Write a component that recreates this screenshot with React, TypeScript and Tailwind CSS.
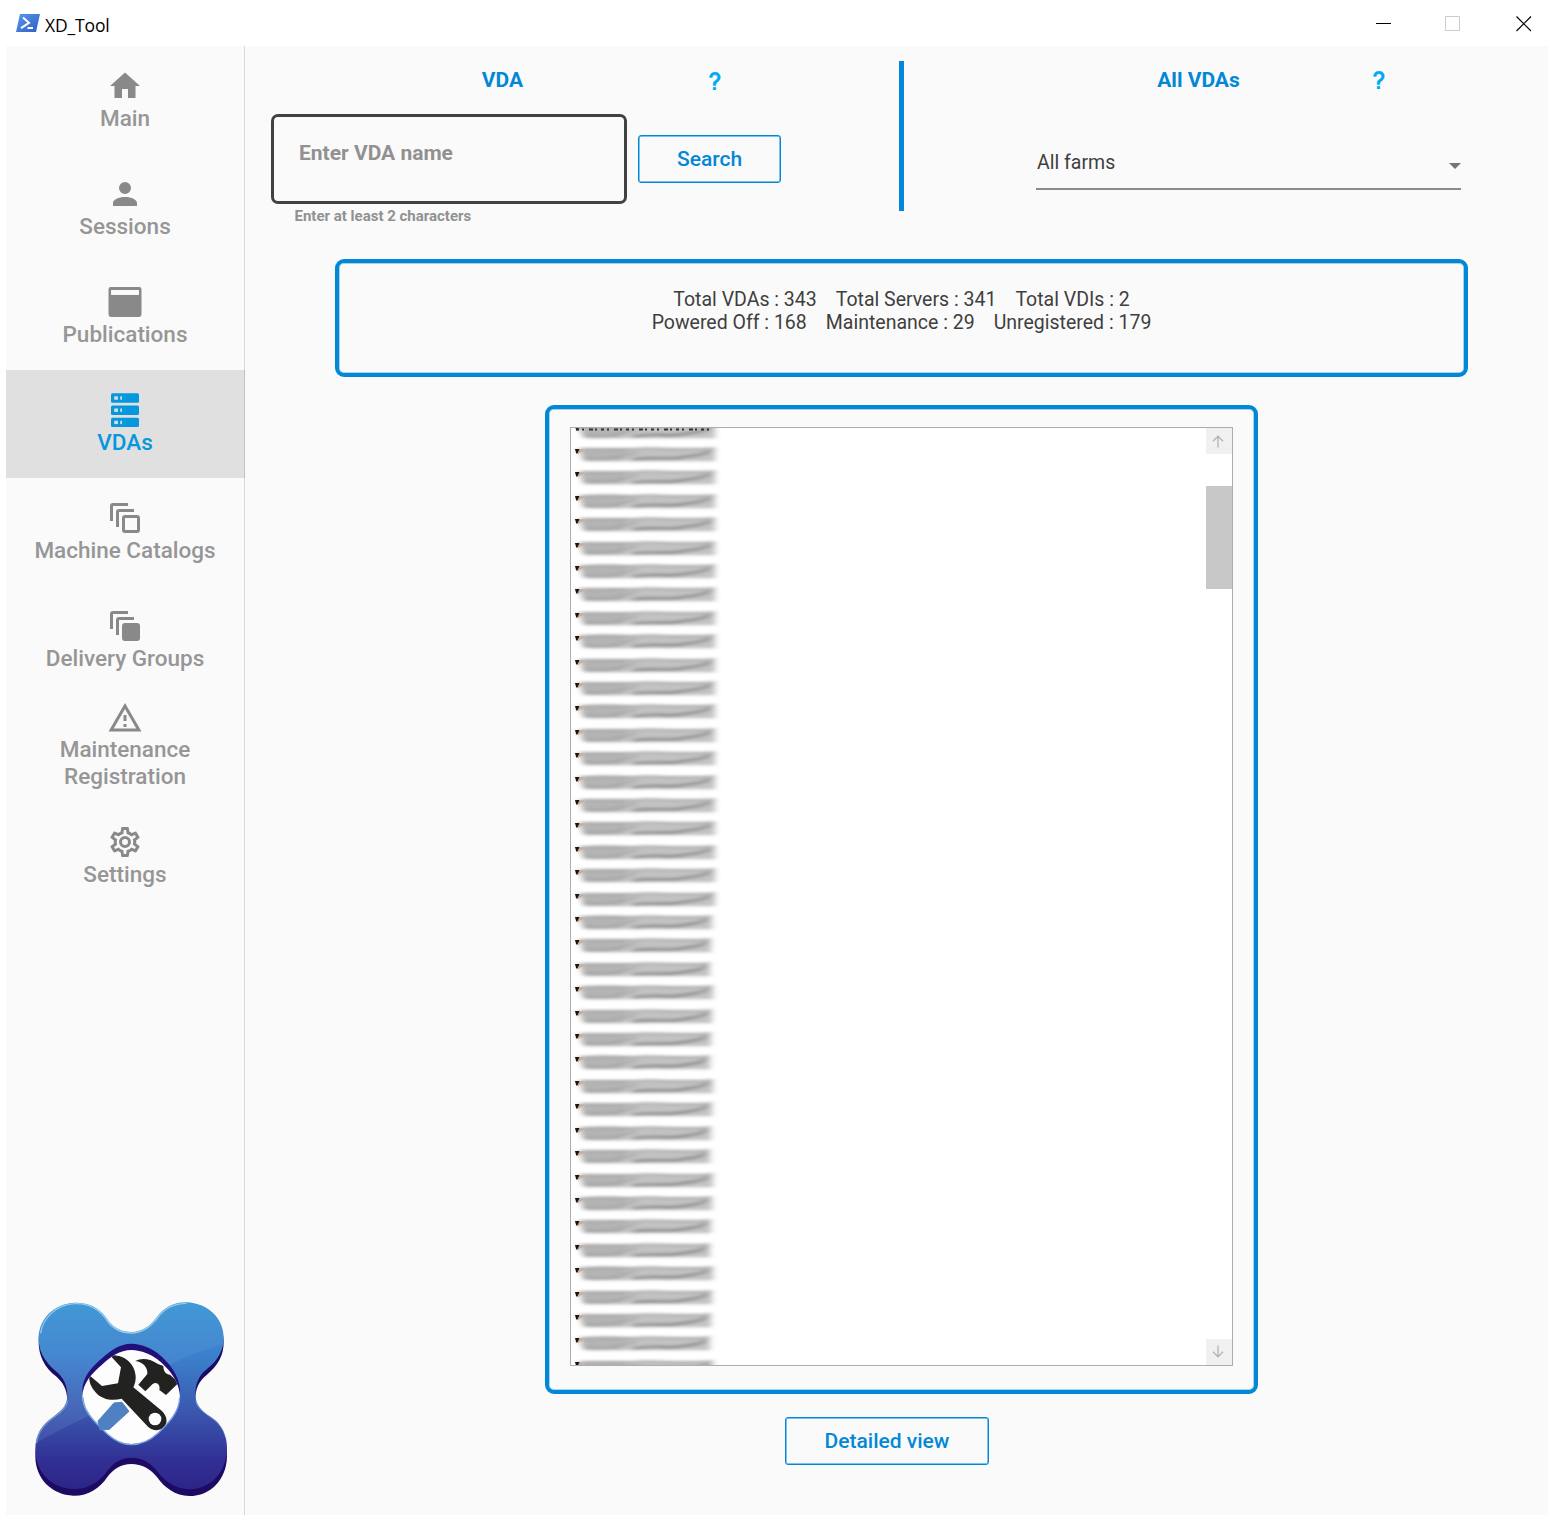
import type { ReactNode } from "react";

const HOME = "M10,20V14H14V20H19V12H22L12,3L2,12H5V20H10Z";
const PERSON =
  "M12,4A4,4 0 0,1 16,8A4,4 0 0,1 12,12A4,4 0 0,1 8,8A4,4 0 0,1 12,4M12,14C16.42,14 20,15.79 20,18V20H4V18C4,15.79 7.58,14 12,14Z";
const WARNING = "M12,2L1,21H23M12,6L19.53,19H4.47M11,10V14H13V10M11,16V18H13V16";
const COG =
  "M12,8A4,4 0 0,1 16,12A4,4 0 0,1 12,16A4,4 0 0,1 8,12A4,4 0 0,1 12,8M12,10A2,2 0 0,0 10,12A2,2 0 0,0 12,14A2,2 0 0,0 14,12A2,2 0 0,0 12,10M10,22C9.75,22 9.54,21.82 9.5,21.58L9.13,18.93C8.5,18.68 7.96,18.34 7.44,17.94L4.95,18.95C4.73,19.03 4.46,18.95 4.34,18.73L2.34,15.27C2.21,15.05 2.27,14.78 2.46,14.63L4.57,12.97L4.5,12L4.57,11L2.46,9.37C2.27,9.22 2.21,8.95 2.34,8.73L4.34,5.27C4.46,5.05 4.73,4.96 4.95,5.05L7.44,6.05C7.96,5.66 8.5,5.32 9.13,5.07L9.5,2.42C9.54,2.18 9.75,2 10,2H14C14.25,2 14.46,2.18 14.5,2.42L14.87,5.07C15.5,5.32 16.04,5.66 16.56,6.05L19.05,5.05C19.27,4.96 19.54,5.05 19.66,5.27L21.66,8.73C21.79,8.95 21.73,9.22 21.54,9.37L19.43,11L19.5,12L19.43,13L21.54,14.63C21.73,14.78 21.79,15.05 21.66,15.27L19.66,18.73C19.54,18.95 19.27,19.04 19.05,18.95L16.56,17.95C16.04,18.34 15.5,18.68 14.87,18.93L14.5,21.58C14.46,21.82 14.25,22 14,22H10M11.25,4L10.88,6.61C9.68,6.86 8.62,7.5 7.85,8.39L5.44,7.35L4.69,8.65L6.8,10.2C6.4,11.37 6.4,12.64 6.8,13.8L4.68,15.36L5.43,16.66L7.86,15.62C8.63,16.5 9.68,17.14 10.87,17.38L11.24,20H12.76L13.13,17.39C14.32,17.14 15.37,16.5 16.14,15.62L18.57,16.66L19.32,15.36L17.2,13.81C17.6,12.64 17.6,11.37 17.2,10.2L19.31,8.65L18.56,7.35L16.15,8.39C15.38,7.5 14.32,6.86 13.12,6.62L12.75,4H11.25Z";
const HELP =
  "M10,19H13V22H10V19M12,2C17.35,2.22 19.68,7.62 16.5,11.67C15.67,12.67 14.33,13.33 13.67,14.17C13,15 13,16 13,17H10C10,15.33 10,13.92 10.67,12.92C11.33,11.92 12.67,11.33 13.5,10.67C15.92,8.43 15.32,5.26 12,5A3,3 0 0,0 9,8H6A6,6 0 0,1 12,2Z";

function Icon({ children }: { children: ReactNode }) {
  return (
    <svg viewBox="0 0 24 24" className="h-9 w-9 shrink-0" fill="currentColor" fillRule="evenodd">
      {children}
    </svg>
  );
}

function StackIcon({ filled }: { filled: boolean }) {
  return (
    <Icon>
      <path d="M14 2v2H4v10H2V4a2 2 0 0 1 2-2zM18 6v2H8v10H6V8a2 2 0 0 1 2-2z" />
      {filled ? (
        <rect x="10" y="10" width="12" height="12" rx="2" />
      ) : (
        <rect x="11" y="11" width="10" height="10" rx="1" fill="none" stroke="currentColor" strokeWidth="2" />
      )}
    </Icon>
  );
}

function ServerIcon() {
  return (
    <svg viewBox="0 0 36 36" className="h-9 w-9 shrink-0" fill="currentColor">
      {[1.3, 13.5, 25.7].map((y) => (
        <g key={y}>
          <rect x="4" y={y} width="28" height="9.4" rx="1.5" />
          <rect x="7.3" y={y + 3} width="3.6" height="3.4" fill="#e0e0e0" />
          <rect x="13.3" y={y + 3} width="1.7" height="3.4" fill="#e0e0e0" />
        </g>
      ))}
    </svg>
  );
}

const NAV: { label: string; icon: ReactNode; active?: boolean }[] = [
  { label: "Main", icon: <Icon><path d={HOME} /></Icon> },
  { label: "Sessions", icon: <Icon><path d={PERSON} /></Icon> },
  {
    label: "Publications",
    icon: (
      <Icon>
        <path d="M2.6 2H21.4A1.6 1.6 0 0 1 23 3.6V20.4A1.6 1.6 0 0 1 21.4 22H2.6A1.6 1.6 0 0 1 1 20.4V3.6A1.6 1.6 0 0 1 2.6 2ZM2.8 4V7.2H21.2V4Z" />
        <path d="M2.8 4V7.2H21.2V4Z" fill="#fafafa" />
      </Icon>
    ),
  },
  { label: "VDAs", icon: <ServerIcon />, active: true },
  { label: "Machine Catalogs", icon: <StackIcon filled={false} /> },
  { label: "Delivery Groups", icon: <StackIcon filled /> },
  { label: "Maintenance\nRegistration", icon: <Icon><path d={WARNING} /></Icon> },
  { label: "Settings", icon: <Icon><path d={COG} /></Icon> },
];

function Logo() {
  const body =
    "M165 38C215 36 245 62 262 88C280 114 304 126 334 126C368 126 390 108 410 82C430 54 462 36 500 37C562 40 610 88 611 148C612 190 592 222 560 246C535 266 526 288 526 318C527 350 546 368 572 384C604 404 622 440 621 485C619 552 572 600 508 600C466 600 432 574 412 546C392 520 366 506 334 506C302 506 282 520 262 544C240 576 204 600 160 599C96 597 46 550 46 484C46 440 66 406 100 384C126 366 142 350 142 320C141 290 130 268 108 250C74 224 55 190 56 146C58 86 104 40 165 38Z";
  const face =
    "M165 38C215 36 245 62 262 88C280 114 304 126 334 126C368 126 390 108 410 82C430 54 462 36 500 37C562 40 610 82 611 142C612 180 592 214 560 238C535 258 526 284 526 314C527 346 546 364 572 380C604 400 622 434 621 478C619 548 572 597 508 598C466 598 432 572 412 544C392 518 366 503 334 503C302 503 282 518 262 542C240 574 204 598 160 597C96 595 46 548 46 477C46 434 66 402 100 380C126 362 142 346 142 316C141 284 130 262 108 244C74 216 55 184 56 142C58 84 104 40 165 38Z";
  const hole =
    "M334 180C366 182 392 192 412 208C440 230 480 272 480 322C478 366 446 396 416 426C394 448 366 462 334 462C304 462 280 448 258 428C226 398 188 366 187 322C187 278 218 248 246 224C272 200 300 180 334 180Z";
  return (
    <svg viewBox="30 21 612 618" className="h-[206px] w-[204px] shrink-0">
      <defs>
        <linearGradient id="face" x1="0" y1="0" x2="0" y2="1">
          <stop offset="0" stopColor="#3c96d6" />
          <stop offset="0.3" stopColor="#3b7fcb" />
          <stop offset="0.6" stopColor="#3a55ad" />
          <stop offset="0.85" stopColor="#312f94" />
          <stop offset="1" stopColor="#2d2588" />
        </linearGradient>
        <linearGradient id="gloss" x1="0" y1="0" x2="0" y2="1">
          <stop offset="0" stopColor="#fff" stopOpacity="0.02" />
          <stop offset="1" stopColor="#8fc4f4" stopOpacity="0.14" />
        </linearGradient>
        <clipPath id="faceClip"><path d={face} /></clipPath>
        <clipPath id="holeClip"><path d={hole} /></clipPath>
      </defs>
      <path d={body} fill="#1d0a62" transform="translate(0 2) scale(1 1.027)" />
      <path d={face} fill="url(#face)" />
      <g clipPath="url(#faceClip)">
        <path d="M30 20H642V150C560 180 470 200 400 260C270 360 140 400 30 470Z" fill="url(#gloss)" />
        <path
          d="M62 130C68 86 106 44 165 41C213 39 242 64 260 90C280 118 304 129 334 129C368 129 392 110 412 84C432 56 464 40 500 40"
          fill="none" stroke="#b8e2f8" strokeWidth="4" opacity="0.7"
        />
        <path d="M50 460C54 420 80 396 104 380C126 366 140 350 143 332" fill="none" stroke="#8fb9e8" strokeWidth="4" opacity="0.6" />
        <path d="M528 332C530 350 548 366 574 382C596 396 612 418 618 444" fill="none" stroke="#8fb9e8" strokeWidth="4" opacity="0.6" />
      </g>
      <path d={hole} fill="#22107a" transform="translate(0 -19)" />
      <path d={hole} fill="#fdfdfd" />
      <path d="M189 322C190 366 228 400 262 432C284 452 306 464 334 464C364 464 392 450 414 430C446 398 478 368 479 322" fill="none" stroke="#7ba4de" strokeWidth="4" />
      <g clipPath="url(#holeClip)">
        <path
          d="M270 196C310 192 344 218 347 258C348 272 344 284 340 292L425 362C444 380 444 402 428 414C416 424 396 422 384 410L305 326C276 334 246 328 228 308C212 292 206 274 208 256L246 288L294 280L303 232Z"
          fill="#222221"
        />
        <path
          d="M346 213C364 202 392 206 414 222L430 228C430 244 438 254 450 254L476 278L438 315L418 300C422 284 410 274 398 282L376 304L355 284L382 252C384 232 368 216 346 213Z"
          fill="#222221"
        />
      </g>
      <circle cx="405" cy="387" r="19" fill="#fdfdfd" />
      <path d="M282 339L306 337L327 364L268 418L240 420L234 393Z" fill="#4f81c2" stroke="#4f81c2" strokeWidth="3" strokeLinejoin="round" />
    </svg>
  );
}

function Sidebar() {
  return (
    <nav className="flex w-[239px] shrink-0 flex-col border-r border-[#d8d8d8]">
      {NAV.map((n) => (
        <div
          key={n.label}
          className={
            n.active
              ? "-mr-px flex h-27 shrink-0 flex-col items-center gap-px border-r border-[#c2c2c2] bg-[#e0e0e0] pt-[22px] text-[#0598dc]"
              : n.label.includes("\n")
                ? "flex h-27 shrink-0 flex-col items-center pt-[6px] text-[#898989]"
                : "flex h-27 shrink-0 flex-col items-center gap-px pt-[22px] text-[#898989]"
          }
        >
          {n.icon}
          <span
            className={
              n.active
                ? "text-center text-[22.5px] leading-[27px] font-medium"
                : "text-center text-[22.5px] leading-[27px] font-medium whitespace-pre-line text-[#969696]"
            }
          >
            {n.label}
          </span>
        </div>
      ))}
      <div className="mt-auto pb-3 pl-6">
        <Logo />
      </div>
    </nav>
  );
}

function TitleBar() {
  return (
    <header className="flex h-[46px] shrink-0 items-center bg-white pl-[15px]">
      <svg viewBox="0 0 26 20" className="h-5 w-[26px]">
        <defs>
          <linearGradient id="ps" x1="0" y1="0" x2="1" y2="1">
            <stop offset="0" stopColor="#5a97ef" />
            <stop offset="1" stopColor="#2c5fc4" />
          </linearGradient>
        </defs>
        <path d="M5 1H25L21 19H1Z" fill="url(#ps)" />
        <path d="M8 4.5L14 9.8L6 15.2" fill="none" stroke="#fff" strokeWidth="2" />
        <path d="M12.5 15H18" stroke="#fff" strokeWidth="2" />
      </svg>
      <span className="ml-1 pt-[3px] font-['Open_Sans',sans-serif] text-[17.5px] leading-6 tracking-[-0.15px] text-black">XD_Tool</span>
      <div className="mt-0.5 ml-auto flex items-center pr-[22px]">
        <svg viewBox="0 0 16 16" className="h-4 w-4"><path d="M0 7.5H15" stroke="#000" /></svg>
        <svg viewBox="0 0 16 16" className="ml-[53px] h-4 w-4"><path d="M.5 .5H14.5V14.5H.5Z" fill="none" stroke="#ccc" /></svg>
        <svg viewBox="0 0 16 16" className="ml-[55px] h-4 w-4"><path d="M.5 .5L15 15M15 .5L.5 15" stroke="#000" strokeWidth="1.2" /></svg>
      </div>
    </header>
  );
}

function Help({ className }: { className: string }) {
  return (
    <svg viewBox="6 2 12 20" className={className} fill="#03a9f4" stroke="#03a9f4" strokeWidth="0.5">
      <path d={HELP} />
    </svg>
  );
}

const STATS = [
  ["Total VDAs : 343", "Total Servers : 341", "Total VDIs : 2"],
  ["Powered Off : 168", "Maintenance : 29", "Unregistered : 179"],
];

const ROWS = Array.from({ length: 41 }, (_, i) => i);

function SmudgedRow({ index }: { index: number }) {
  const w = index < 21 ? 146 : 144 - (index % 4);
  const bend = (index % 3) - 1;
  return (
    <svg viewBox="0 0 150 23.41" className="block h-[23.41px] w-[150px]">
      <g filter="url(#smear)">
        <path d={`M7 5.2H${w - 2}V18.2H13Z`} fill="#c2c2c2" />
        <path d="M8 5.6H58L50 17.8H14Z" fill="#a6a6a6" opacity="0.5" />
        <path d={`M12 6C40 ${5 + bend} 56 7 68 5.5S110 8 ${w - 2} 5`} fill="none" stroke="#9c9c9c" strokeWidth="1.6" />
        <path d={`M62 16.5C84 ${13.5 + bend} 96 17 110 14.5S128 13 ${w - 6} 8`} fill="none" stroke="#858585" strokeWidth="2.4" />
        <path d={`M12 15C30 ${18 - bend} 44 16 66 9`} fill="none" stroke="#9f9f9f" strokeWidth="1.8" />
      </g>
      <path d="M5 6.5L13 6.5L7 11.5Z" fill="#c98c58" opacity="0.55" />
      <path d="M4 6H8.5L6.4 10.5H5.2Z" fill="#14141c" />
    </svg>
  );
}

function ScrollArrow({ down }: { down?: boolean }) {
  return (
    <div className="flex h-[26px] w-[26px] shrink-0 items-center justify-center bg-[#f0f0f0]">
      <svg viewBox="0 0 12 13" className={down ? "mr-[3px] mb-px h-[13px] w-3 rotate-180" : "mr-[3px] h-[13px] w-3"}>
        <path d="M6 1V12.5M1 6.2L6 1.2L11 6.2" fill="none" stroke="#b4b4b4" strokeWidth="1.3" />
      </svg>
    </div>
  );
}

function VdaList() {
  return (
    <div className="mt-7 ml-[10px] h-[989px] w-[713px] shrink-0 self-center rounded-[9px] border-4 border-[#0288d6] p-[18px] pl-[21px] shadow-[inset_0_0_0_1px_#a5d3ee]">
      <div className="flex h-[939px] w-[663px] justify-between overflow-hidden border border-[#abadb3] bg-white">
        <div className="h-[937px] overflow-hidden">
          <svg className="absolute h-0 w-0">
            <defs>
              <filter id="smear" x="-10%" y="-30%" width="120%" height="160%">
                <feGaussianBlur stdDeviation="3 1.6" />
              </filter>
            </defs>
          </svg>
          <div className="-mt-[8.5px]">
            {ROWS.map((i) => (
              <SmudgedRow key={i} index={i} />
            ))}
          </div>
          <svg viewBox="0 0 150 3" className="relative -top-[951.3px] block h-[3px] w-[150px]">
            <path d="M5 1.5H142" stroke="#333" strokeWidth="2" strokeDasharray="3 3 2 5 4 2 2 4" />
          </svg>
          <svg viewBox="0 0 150 2" className="relative -top-[17.6px] block h-0.5 w-[150px]">
            <path d="M5 1H138" stroke="#777" strokeWidth="1.2" strokeDasharray="3 4 5 3" />
          </svg>
        </div>
        <div className="flex w-[26px] flex-col bg-white">
          <ScrollArrow />
          <div className="mt-8 h-[103px] bg-[#c8c8c8]" />
          <div className="mt-auto">
            <ScrollArrow down />
          </div>
        </div>
      </div>
    </div>
  );
}

export default function App() {
  return (
    <div className="flex h-[1521px] w-[1554px] flex-col overflow-hidden bg-white font-[Roboto,sans-serif]">
      <TitleBar />
      <div className="mx-1.5 flex h-[1469px] bg-[#fafafa]">
        <Sidebar />
        <main className="flex w-[1303px] flex-col">
          <section className="flex h-[165px] pt-[15px]">
            <div className="w-[654px] pl-[26px]">
              <div className="flex h-[38px] items-center">
                <h2 className="w-[463px] text-center text-[21px] leading-7 font-bold text-[#0288d6]">VDA</h2>
                <Help className="mt-px -ml-[25.5px] h-[18px] w-3" />
              </div>
              <div className="mt-[15px] flex gap-[11px]">
                <div className="h-[90px] w-[356px] rounded-[7px] border-3 border-[#424242] px-[25px] pt-[22px] text-[21px] leading-7 font-bold text-[#919191]">
                  Enter VDA name
                </div>
                <button className="mt-[21px] h-12 w-[143px] rounded-[3px] border border-[#0288d6] pt-0.5 text-[21px] font-medium text-[#0288d6] shadow-[inset_0_0_0_0.5px_#0288d6]">
                  Search
                </button>
              </div>
              <p className="mt-0.5 ml-[23.5px] text-[15px] leading-5 font-bold text-[#919191]">Enter at least 2 characters</p>
            </div>
            <div className="h-[150px] w-[5px] bg-[#0288d6]" />
            <div className="w-[557px] pl-[132px]">
              <div className="flex h-[38px] items-center">
                <h2 className="w-[325px] text-center text-[21px] leading-7 font-bold text-[#0288d6]">All VDAs</h2>
                <Help className="ml-[11.5px] h-[18px] w-3" />
              </div>
              <div className="mt-[43px] flex h-[48px] items-center justify-between border-b-2 border-[#8b8b8b] pb-[5px] pl-px">
                <span className="text-[19.5px] leading-6 text-[#3f3f3f]">All farms</span>
                <svg viewBox="0 0 12 6" className="mt-[7px] h-1.5 w-3"><path d="M0 0H12L6 6Z" fill="#757575" /></svg>
              </div>
            </div>
          </section>
          <section className="mt-12 ml-[10px] flex h-[118px] w-[1133px] shrink-0 flex-col items-center self-center rounded-[9px] border-4 border-[#0288d6] pt-[25px] text-[19.5px] leading-[23px] text-[#3f3f3f] shadow-[inset_0_0_0_1px_#a5d3ee]">
            {STATS.map((line) => (
              <div key={line[0]} className="flex gap-[19px]">
                {line.map((s) => (
                  <span key={s}>{s}</span>
                ))}
              </div>
            ))}
          </section>
          <VdaList />
          <button className="mt-[23px] ml-[540px] h-12 w-[204px] rounded-[3px] border border-[#0288d6] pt-0.5 text-[21px] font-medium text-[#0288d6] shadow-[inset_0_0_0_0.5px_#0288d6]">
            Detailed view
          </button>
        </main>
      </div>
    </div>
  );
}
